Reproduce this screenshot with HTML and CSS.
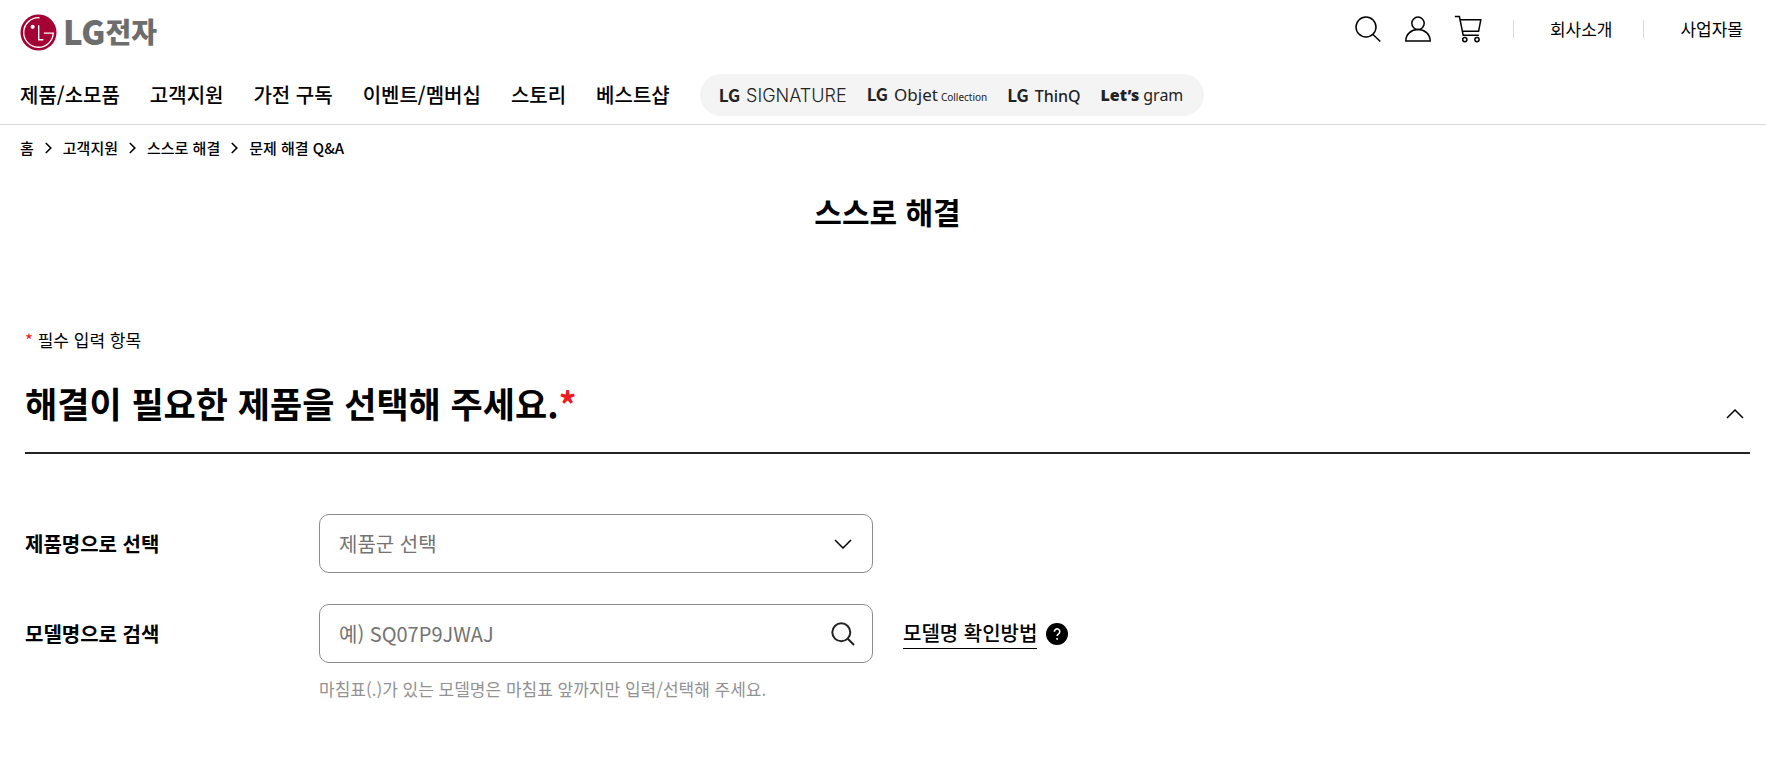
FILE: index.html
```html
<!DOCTYPE html>
<html lang="ko">
<head>
    <meta charset="UTF-8">
    <meta name="viewport" content="width=device-width, initial-scale=1.0">
    <title>스스로 해결 | LG전자</title>
    <link rel="stylesheet" href="styles.css">
</head>
<body>
    <header class="header">
        <div class="header-top">
            <a class="logo" href="#">
                <svg class="logo-mark" viewBox="0 0 38 38" aria-hidden="true">
                    <circle cx="19" cy="19" r="18.5" fill="#a50034"/>
                    <g fill="none" stroke="#fff" stroke-width="1.4">
                        <path d="M20 3.8A15.2 15.2 0 1 0 34.2 19.6H24.5"/>
                        <path d="M19.2 11.5V26.5H24"/>
                    </g>
                    <circle cx="13" cy="13.2" r="2.1" fill="#fff"/>
                </svg>
                <span class="logo-lg">LG</span>
                <span class="logo-kr">전자</span>
            </a>
            <div class="utility">
                <button class="icon-btn" type="button" aria-label="검색">
                    <svg viewBox="0 0 30 30"><circle cx="13" cy="13" r="10"/><path d="M20 20.5l7.3 7"/></svg>
                </button>
                <button class="icon-btn" type="button" aria-label="마이페이지">
                    <svg viewBox="0 0 30 30"><circle cx="15" cy="9.3" r="6.2"/><path d="M2.8 27C2.8 20 8.5 15.5 15 15.5S27.2 20 27.2 27z"/></svg>
                </button>
                <button class="icon-btn" type="button" aria-label="장바구니">
                    <svg viewBox="0 0 30 30"><path d="M1.8 2.5h4.6l3.8 18.8h15.6M7.2 5.8h20.6L25.6 17.3H9.6"/><circle cx="11.8" cy="25.6" r="2.1"/><circle cx="24" cy="25.6" r="2.1"/></svg>
                </button>
                <a class="utility-link" href="#">회사소개</a>
                <a class="utility-link" href="#">사업자몰</a>
            </div>
        </div>
        <nav class="nav">
            <a href="#">제품/소모품</a>
            <a href="#">고객지원</a>
            <a href="#">가전 구독</a>
            <a href="#">이벤트/멤버십</a>
            <a href="#">스토리</a>
            <a href="#">베스트샵</a>
            <div class="brands">
                <a class="brand signature" href="#"><b>LG</b><span>SIGNATURE</span></a>
                <a class="brand objet" href="#"><b>LG</b><span>Objet</span><small>Collection</small></a>
                <a class="brand thinq" href="#"><b>LG</b><span>ThinQ</span></a>
                <a class="brand gram" href="#"><b>Let’s</b><span>gram</span></a>
            </div>
        </nav>
    </header>

    <nav class="breadcrumb" aria-label="breadcrumb">
        <a href="#">홈</a>
        <svg viewBox="0 0 7 12"><path d="M.8 1l5 5-5 5"/></svg>
        <a href="#">고객지원</a>
        <svg viewBox="0 0 7 12"><path d="M.8 1l5 5-5 5"/></svg>
        <a href="#">스스로 해결</a>
        <svg viewBox="0 0 7 12"><path d="M.8 1l5 5-5 5"/></svg>
        <a href="#">문제 해결 Q&amp;A</a>
    </nav>

    <main class="content">
        <h1 class="page-title">스스로 해결</h1>
        <p class="required-note"><span class="star">*</span> 필수 입력 항목</p>

        <section>
            <div class="section-head">
                <h2>해결이 필요한 제품을 선택해 주세요.<span class="star">*</span></h2>
                <button class="toggle-btn" type="button" aria-label="접기">
                    <svg viewBox="0 0 18 10"><path d="M1 9l8-8 8 8"/></svg>
                </button>
            </div>

            <form class="form">
                <div class="form-row">
                    <label for="product">제품명으로 선택</label>
                    <div class="field">
                        <select id="product">
                            <option>제품군 선택</option>
                        </select>
                        <svg class="select-arrow" viewBox="0 0 18 10"><path d="M1 1l8 8 8-8"/></svg>
                    </div>
                </div>
                <div class="form-row">
                    <label for="model">모델명으로 검색</label>
                    <div class="field">
                        <input id="model" type="text" placeholder="예) SQ07P9JWAJ">
                        <button class="search-btn" type="button" aria-label="모델명 검색">
                            <svg viewBox="0 0 24 24"><circle cx="10.3" cy="10.3" r="9"/><path d="M16.8 16.8l6.2 6.2"/></svg>
                        </button>
                    </div>
                    <a class="guide" href="#">
                        <span>모델명 확인방법</span>
                        <svg viewBox="0 0 22 22"><circle cx="11" cy="11" r="11"/><path d="M8.4 8.7a2.7 2.7 0 1 1 4.2 2.1c-1 .7-1.5 1.1-1.5 2.3M11.1 14.9v1.9"/></svg>
                    </a>
                </div>
                <p class="help">마침표(.)가 있는 모델명은 마침표 앞까지만 입력/선택해 주세요.</p>
            </form>
        </section>
    </main>
</body>
</html>
```
FILE: styles.css
```css
* {
    box-sizing: border-box;
}

body {
    margin: 0;
    background: #fff;
    color: #000;
    font-family: "Noto Sans CJK KR", "Noto Sans", sans-serif;
    font-size: 20px;
    line-height: 30px;
}

a {
    color: inherit;
    text-decoration: none;
}

h1, h2, p {
    margin: 0;
}

button {
    padding: 0;
    border: none;
    background: none;
    cursor: pointer;
}

svg {
    display: block;
    fill: none;
    stroke: #000;
}

/* header */
.header {
    border-bottom: 1px solid #d9d9d9;
}

.header-top {
    display: flex;
    justify-content: space-between;
    align-items: flex-start;
    height: 74px;
    padding: 14px 23px 0 20px;
}

.logo {
    display: flex;
    align-items: center;
    height: 37px;
    color: #6b6e6c;
    font-weight: 900;
}

.logo-mark {
    width: 37px;
    height: 37px;
    margin-right: 6px;
    stroke: none;
}

.logo-lg,
.logo-kr {
    padding-bottom: 3px;
}

.logo-lg {
    font-size: 33px;
}

.logo-kr {
    font-size: 28px;
}

.utility {
    display: flex;
    align-items: center;
    font-size: 17px;
}

.icon-btn {
    margin-right: 20px;
}

.icon-btn svg {
    width: 30px;
    height: 30px;
    stroke-width: 1.5;
}

.utility-link {
    display: flex;
    align-items: center;
}

.utility-link::before {
    content: "";
    width: 1px;
    height: 18px;
    margin: 0 36px 0 31px;
    background: #d9d9d9;
}

.icon-btn + .utility-link::before {
    margin-left: 10px;
}

.nav {
    display: flex;
    align-items: center;
    gap: 30px;
    padding: 0 20px 8px;
    font-weight: 500;
}

.brands {
    display: flex;
    align-items: center;
    gap: 20px;
    height: 42px;
    padding: 0 21px 0 19px;
    border-radius: 21px;
    background: #f4f4f4;
    color: #222;
    font-family: "Noto Sans", sans-serif;
    font-size: 16px;
    font-weight: 400;
}

.brand {
    display: flex;
    align-items: baseline;
    gap: 6px;
}

.brand b {
    font-family: "Noto Sans CJK KR", sans-serif;
    font-size: 17px;
    font-weight: 700;
}

.signature span {
    font-family: Inter, sans-serif;
    font-size: 18px;
    font-weight: 300;
}

.objet span {
    font-size: 17px;
}

.objet small {
    margin-left: -3px;
    font-size: 10px;
}

.thinq span {
    font-weight: 500;
}

.gram {
    gap: 4px;
}

.gram b {
    font-family: "Noto Sans", sans-serif;
    font-size: 16px;
    font-weight: 900;
}

/* breadcrumb */
.breadcrumb {
    display: flex;
    align-items: center;
    gap: 11px;
    padding: 8px 20px 0;
    font-size: 15px;
    font-weight: 500;
}

.breadcrumb svg {
    width: 7px;
    height: 12px;
    stroke-width: 1.6;
}

/* content */
.content {
    padding: 0 16px 40px 25px;
}

.page-title {
    padding-top: 28px;
    font-size: 30px;
    line-height: 40px;
    text-align: center;
}

.required-note {
    margin-top: 94px;
    font-size: 17px;
}

.star {
    color: #ed1c24;
}

.section-head {
    display: flex;
    align-items: center;
    justify-content: space-between;
    margin-top: 22px;
    padding: 0 6px 23px 0;
    border-bottom: 2px solid #222;
}

.section-head h2 {
    font-size: 35px;
    line-height: 52px;
}

.toggle-btn {
    padding-top: 22px;
}

.toggle-btn svg,
.select-arrow {
    width: 18px;
    height: 10px;
    stroke-width: 1.5;
}

.form {
    padding-top: 60px;
}

.form-row {
    display: flex;
    align-items: center;
    margin-bottom: 31px;
}

.form-row label {
    flex: 0 0 294px;
    font-weight: 700;
}

.field {
    position: relative;
    flex: 0 1 554px;
}

.field select,
.field input {
    display: block;
    width: 100%;
    height: 59px;
    padding: 0 60px 0 19px;
    border: 1px solid #8c8c8c;
    border-radius: 10px;
    background: #fff;
    color: #737373;
    font: inherit;
    appearance: none;
}

.field input::placeholder {
    color: #737373;
}

.select-arrow {
    position: absolute;
    top: 25px;
    right: 21px;
    pointer-events: none;
}

.search-btn {
    position: absolute;
    top: 18px;
    right: 18px;
}

.search-btn svg {
    width: 24px;
    height: 24px;
    stroke: #222;
    stroke-width: 2;
}

.guide {
    display: flex;
    align-items: center;
    gap: 9px;
    margin-left: 30px;
    font-weight: 500;
}

.guide span {
    border-bottom: 1px solid #000;
}

.guide svg {
    width: 22px;
    height: 22px;
    fill: #000;
    stroke: none;
}

.guide path {
    fill: none;
    stroke: #fff;
    stroke-width: 1.6;
}

.help {
    margin: -20px 0 0 294px;
    color: #929292;
    font-size: 17px;
}
```
